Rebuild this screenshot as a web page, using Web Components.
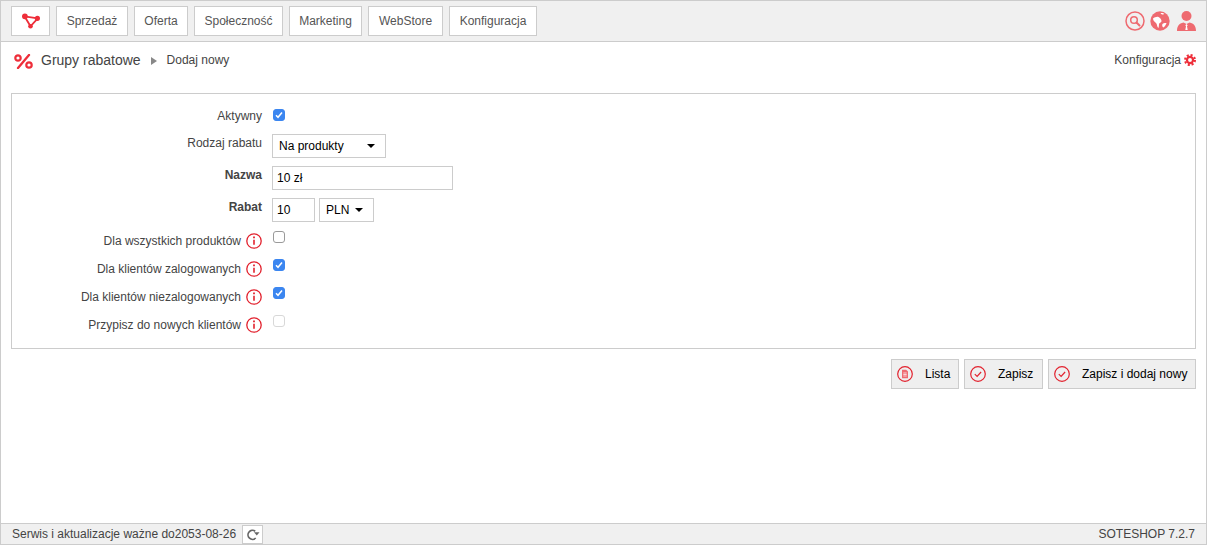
<!DOCTYPE html>
<html lang="pl">
<head>
<meta charset="utf-8">
<title>Grupy rabatowe</title>
<style>
html, body { margin: 0; height: 100%; background: #fff; overflow: hidden; }
body { font: 12px "Liberation Sans", Arial, sans-serif; color: #444; }
</style>
</head>
<body>
<app-shell>
  <top-bar slot="top">
    <nav-button logo w="39"></nav-button>
    <nav-button w="72">Sprzedaż</nav-button>
    <nav-button w="54">Oferta</nav-button>
    <nav-button w="89">Społeczność</nav-button>
    <nav-button w="73">Marketing</nav-button>
    <nav-button w="75">WebStore</nav-button>
    <nav-button w="88">Konfiguracja</nav-button>
  </top-bar>
  <page-head slot="head" title-text="Grupy rabatowe" sub="Dodaj nowy" link="Konfiguracja"></page-head>
  <form-panel>
    <form-row label="Aktywny" kind="first"><check-box checked></check-box></form-row>
    <form-row label="Rodzaj rabatu"><select-box w="114">Na produkty</select-box></form-row>
    <form-row label="Nazwa" strong><text-box w="181">10 zł</text-box></form-row>
    <form-row label="Rabat" strong><text-box w="43">10</text-box><select-box w="55">PLN</select-box></form-row>
    <form-row label="Dla wszystkich produktów" info kind="check"><check-box></check-box></form-row>
    <form-row label="Dla klientów zalogowanych" info kind="check"><check-box checked></check-box></form-row>
    <form-row label="Dla klientów niezalogowanych" info kind="check"><check-box checked></check-box></form-row>
    <form-row label="Przypisz do nowych klientów" info kind="check"><check-box disabled></check-box></form-row>
  </form-panel>
  <action-bar>
    <action-button icon="list" w="68">Lista</action-button>
    <action-button icon="ok" w="79">Zapisz</action-button>
    <action-button icon="ok" w="148">Zapisz i dodaj nowy</action-button>
  </action-bar>
  <status-bar slot="foot" left="Serwis i aktualizacje ważne do2053-08-26" right="SOTESHOP 7.2.7"></status-bar>
</app-shell>

<script>
function shadow(el, html) {
  el.attachShadow({ mode: "open" }).innerHTML = html;
}

class AppShell extends HTMLElement {
  constructor() {
    super();
    shadow(this, `<style>
      :host { display: flex; flex-direction: column; box-sizing: border-box; height: 545px;
        border-left: 1px solid #ccc; border-right: 1px solid #ccc; }
      main { flex: 1; padding: 0 10px; display: flex; flex-direction: column; }
    </style>
    <slot name="top"></slot><slot name="head"></slot>
    <main><slot></slot></main>
    <slot name="foot"></slot>`);
  }
}

class TopBar extends HTMLElement {
  constructor() {
    super();
    shadow(this, `<style>
      :host { display: block; background: #f0f0f0; border-top: 1px solid #ccc; border-bottom: 1px solid #ccc; }
      .bar { height: 40px; display: flex; align-items: center; padding: 0 10px; gap: 6px; }
      .icons { margin-left: auto; display: flex; align-items: center; gap: 5px; }
      svg { display: block; }
    </style>
    <div class="bar"><slot></slot>
      <div class="icons">
        <svg width="20" height="20" viewBox="0 0 20 20" fill="none" stroke="#ee6a70"><circle cx="10" cy="10" r="9" stroke-width="1.500"/><circle cx="9" cy="9" r="3.300" stroke-width="1.500"/><path d="M11.500 11.500l3 3" stroke-width="2" stroke-linecap="round"/></svg>
        <svg width="20" height="20" viewBox="0 0 20 20"><circle cx="10" cy="10" r="9.700" fill="#ee6a70"/><path d="M3 7.500c1.500-1.200 4-2.200 5.500-1.500 1.500.5 3.200 2.800 3 4.200-.2 1.300-1.700 1.300-2.300 2.300-.5.900 0 2.800-.8 4.500-1.500-1-1.200-3.200-2-4.500C5.500 11 3 10 3 7.500zM12.500 13c1-1 2.800-1.300 4-1-.5 1.800-1.500 3.500-3.300 4.500-1-1-1.300-2.500-.7-3.500zM10.500 2.200c1.500-.4 3 .1 3.800.8-.8.7-2.800.7-3.800-.8z" fill="#fff"/></svg>
        <svg width="19" height="20" viewBox="0 0 19 20" style="margin-left:2px"><circle cx="9.500" cy="5" r="5" fill="#ee6a70"/><path d="M0 20c0-5 2-7.500 6.500-8.500l3 1.500 3-1.500c4.500 1 6.500 3.500 6.500 8.500z" fill="#ee6a70"/><path d="M9.500 13l1.200 1.300-.7 1 .7 3.700H8.300l.7-3.700-.7-1z" fill="#fff"/></svg>
      </div>
    </div>`);
  }
}

class NavButton extends HTMLElement {
  constructor() {
    super();
    const logo = this.hasAttribute("logo");
    shadow(this, `<style>
      :host { display: block; }
      .b { box-sizing: border-box; height: 30px; width: ${this.getAttribute("w")}px; background: #fff; border: 1px solid #ccc;
        display: flex; align-items: center; justify-content: center; color: #555; font-size: 12px; }
      svg { display: block; }
    </style>
    <div class="b">${logo ? `<svg width="18" height="16" viewBox="0 0 18 16">
      <path d="M2.500 3.300L15.800 5.300 8.500 13.300z" fill="none" stroke="#ee2e3a" stroke-width="1.800"/>
      <circle cx="2.900" cy="3.300" r="2.900" fill="#ee2e3a"/><circle cx="15.400" cy="5.300" r="2.600" fill="#ee2e3a"/><circle cx="8.500" cy="13.300" r="2.300" fill="#ee2e3a"/>
    </svg>` : `<slot></slot>`}</div>`);
  }
}

class PageHead extends HTMLElement {
  constructor() {
    super();
    const a = n => this.getAttribute(n);
    shadow(this, `<style>
      :host { display: flex; align-items: center; box-sizing: border-box; height: 38px; padding: 0 10px 2px 13px; color: #444; }
      svg { display: block; }
      .t { font-size: 14px; margin-left: 8px; }
      .arrow { width: 0; height: 0; border-left: 6px solid #888; border-top: 4px solid transparent;
        border-bottom: 4px solid transparent; margin: 2px 10px 0 10px; }
      .s { font-size: 12px; }
      .l { margin-left: auto; font-size: 12px; display: flex; align-items: center; gap: 3px; }
    </style>
    <svg width="19" height="15" viewBox="0 0 19 15" fill="none" stroke="#ee2e3a" style="margin-top:2px">
      <circle cx="4" cy="4" r="2.700" stroke-width="2.200"/><circle cx="15" cy="11" r="2.700" stroke-width="2.200"/>
      <path d="M15 1L4 14" stroke-width="2.300" stroke-linecap="round"/></svg>
    <span class="t">${a("title-text")}</span><span class="arrow"></span><span class="s">${a("sub")}</span>
    <span class="l">${a("link")}
      <svg width="12" height="12" viewBox="0 0 13 13" fill="none" stroke="#ee2e3a"><circle cx="6.500" cy="6.500" r="3.300" stroke-width="2.400"/><circle cx="6.500" cy="6.500" r="5.400" stroke-width="2.200" stroke-dasharray="2.240 2"/></svg>
    </span>`);
  }
}

class FormPanel extends HTMLElement {
  constructor() {
    super();
    shadow(this, `<style>
      :host { display: flex; flex-direction: column; box-sizing: border-box; height: 256px;
        margin-top: 13px; padding: 15px 0 0 0; gap: 8px; border: 1px solid #ccc; }
    </style><slot></slot>`);
  }
}

class FormRow extends HTMLElement {
  constructor() {
    super();
    const strong = this.hasAttribute("strong");
    const info = this.hasAttribute("info");
    const kind = this.getAttribute("kind");
    const rowH = kind == "first" ? 17 : kind == "check" ? 20 : 24;
    const labH = kind == "first" ? 14 : kind == "check" ? 22 : 18;
    shadow(this, `<style>
      :host { display: flex; height: ${rowH}px; align-items: flex-start; }
      .lab { width: 250px; display: flex; justify-content: flex-end; align-items: center; gap: 5px;
        font-size: 12px; color: #444; font-weight: ${strong ? "bold" : "normal"}; height: ${labH}px; }
      .c { margin-left: 10px; display: flex; gap: 4px; padding-top: ${kind == "check" ? 1 : 0}px; }
      svg { display: block; }
    </style>
    <div class="lab"><span>${this.getAttribute("label")}</span>${info ? `<svg width="16" height="16" viewBox="0 0 16 16" fill="none" stroke="#e2222e">
      <circle cx="8" cy="8" r="7.200" stroke-width="1.300"/><path d="M8 6.800v5" stroke-width="1.600"/><path d="M8 3.600v1.700" stroke-width="1.800"/></svg>` : ""}</div>
    <div class="c"><slot></slot></div>`);
  }
}

class CheckBox extends HTMLElement {
  constructor() {
    super();
    const on = this.hasAttribute("checked");
    const off = this.hasAttribute("disabled");
    shadow(this, `<style>
      :host { display: block; padding: 0 0 0 1px; }
      .x { box-sizing: border-box; width: 12px; height: 12px; border-radius: 3px;
        background: ${on ? "#3b86f0" : "#fff"}; border: 1px solid ${on ? "#3b86f0" : off ? "#d8d8d8" : "#9a9a9a"};
        display: flex; align-items: center; justify-content: center; }
      svg { display: block; }
    </style>
    <div class="x">${on ? `<svg width="8" height="8" viewBox="0 0 8 8"><path d="M1 4.300l2 2L7 1.500" fill="none" stroke="#fff" stroke-width="1.500"/></svg>` : ""}</div>`);
  }
}

class SelectBox extends HTMLElement {
  constructor() {
    super();
    shadow(this, `<style>
      :host { display: block; }
      .s { box-sizing: border-box; width: ${this.getAttribute("w")}px; height: 24px; background: #fff;
        border: 1px solid #ccc; display: flex; align-items: center; padding: 0 10px 0 6px; color: #000; font-size: 12px; }
      i { margin-left: auto; width: 0; height: 0; border-top: 4px solid #000;
        border-left: 4px solid transparent; border-right: 4px solid transparent; }
    </style><div class="s"><slot></slot><i></i></div>`);
  }
}

class TextBox extends HTMLElement {
  constructor() {
    super();
    shadow(this, `<style>
      :host { display: block; }
      .s { box-sizing: border-box; width: ${this.getAttribute("w")}px; height: 24px; background: #fff;
        border: 1px solid #ccc; display: flex; align-items: center; padding: 0 4px; color: #000; font-size: 12px; }
    </style><div class="s"><slot></slot></div>`);
  }
}

class ActionBar extends HTMLElement {
  constructor() {
    super();
    shadow(this, `<style>
      :host { display: flex; justify-content: flex-end; gap: 5px; margin-top: 10px; }
    </style><slot></slot>`);
  }
}

class ActionButton extends HTMLElement {
  constructor() {
    super();
    const ic = this.getAttribute("icon") == "list"
      ? `<path d="M5 3.800h4.200L11 5.600v6.600H5z" fill="#ee6a70"/><path d="M6.300 7h3.400M6.300 8.500h3.400M6.300 10h3.400" stroke="#fff" stroke-width=".7"/>`
      : `<path d="M4.800 8.200l2.300 2.300 4-4.500" fill="none" stroke="#e2222e" stroke-width="1.200"/>`;
    shadow(this, `<style>
      :host { display: block; }
      .b { box-sizing: border-box; width: ${this.getAttribute("w")}px; height: 30px; background: #efefef; border: 1px solid #ccc;
        display: flex; align-items: center; padding-left: 5px; color: #000; font-size: 12px; white-space: nowrap; }
      svg { display: block; margin-right: 12px; }
    </style>
    <div class="b"><svg width="16" height="16" viewBox="0 0 16 16"><circle cx="8" cy="8" r="7.300" fill="none" stroke="#e2222e" stroke-width="1.200"/>${ic}</svg><slot></slot></div>`);
  }
}

class StatusBar extends HTMLElement {
  constructor() {
    super();
    shadow(this, `<style>
      :host { display: flex; box-sizing: border-box; height: 22px; align-items: center; background: #f0f0f0;
        border-top: 1px solid #ccc; border-bottom: 1px solid #ccc; padding: 0 11px; color: #444; font-size: 12px; }
      .r { margin-left: auto; }
      .ref { box-sizing: border-box; width: 21px; height: 19px; background: #fff; border: 1px solid #ccc; margin-left: 6px;
        display: flex; align-items: center; justify-content: center; }
      svg { display: block; }
    </style>
    <span>${this.getAttribute("left")}</span>
    <span class="ref"><svg width="14" height="13" viewBox="0 0 14 13" fill="none"><path d="M9.200 3.200A4.500 4.500 0 1 0 9.700 10" stroke="#666" stroke-width="1.700"/><path d="M8 4.200h5.500L10.800 7.600z" fill="#666"/></svg></span>
    <span class="r">${this.getAttribute("right")}</span>`);
  }
}

customElements.define("app-shell", AppShell);
customElements.define("top-bar", TopBar);
customElements.define("nav-button", NavButton);
customElements.define("page-head", PageHead);
customElements.define("form-panel", FormPanel);
customElements.define("form-row", FormRow);
customElements.define("check-box", CheckBox);
customElements.define("select-box", SelectBox);
customElements.define("text-box", TextBox);
customElements.define("action-bar", ActionBar);
customElements.define("action-button", ActionButton);
customElements.define("status-bar", StatusBar);
</script>
</body>
</html>
